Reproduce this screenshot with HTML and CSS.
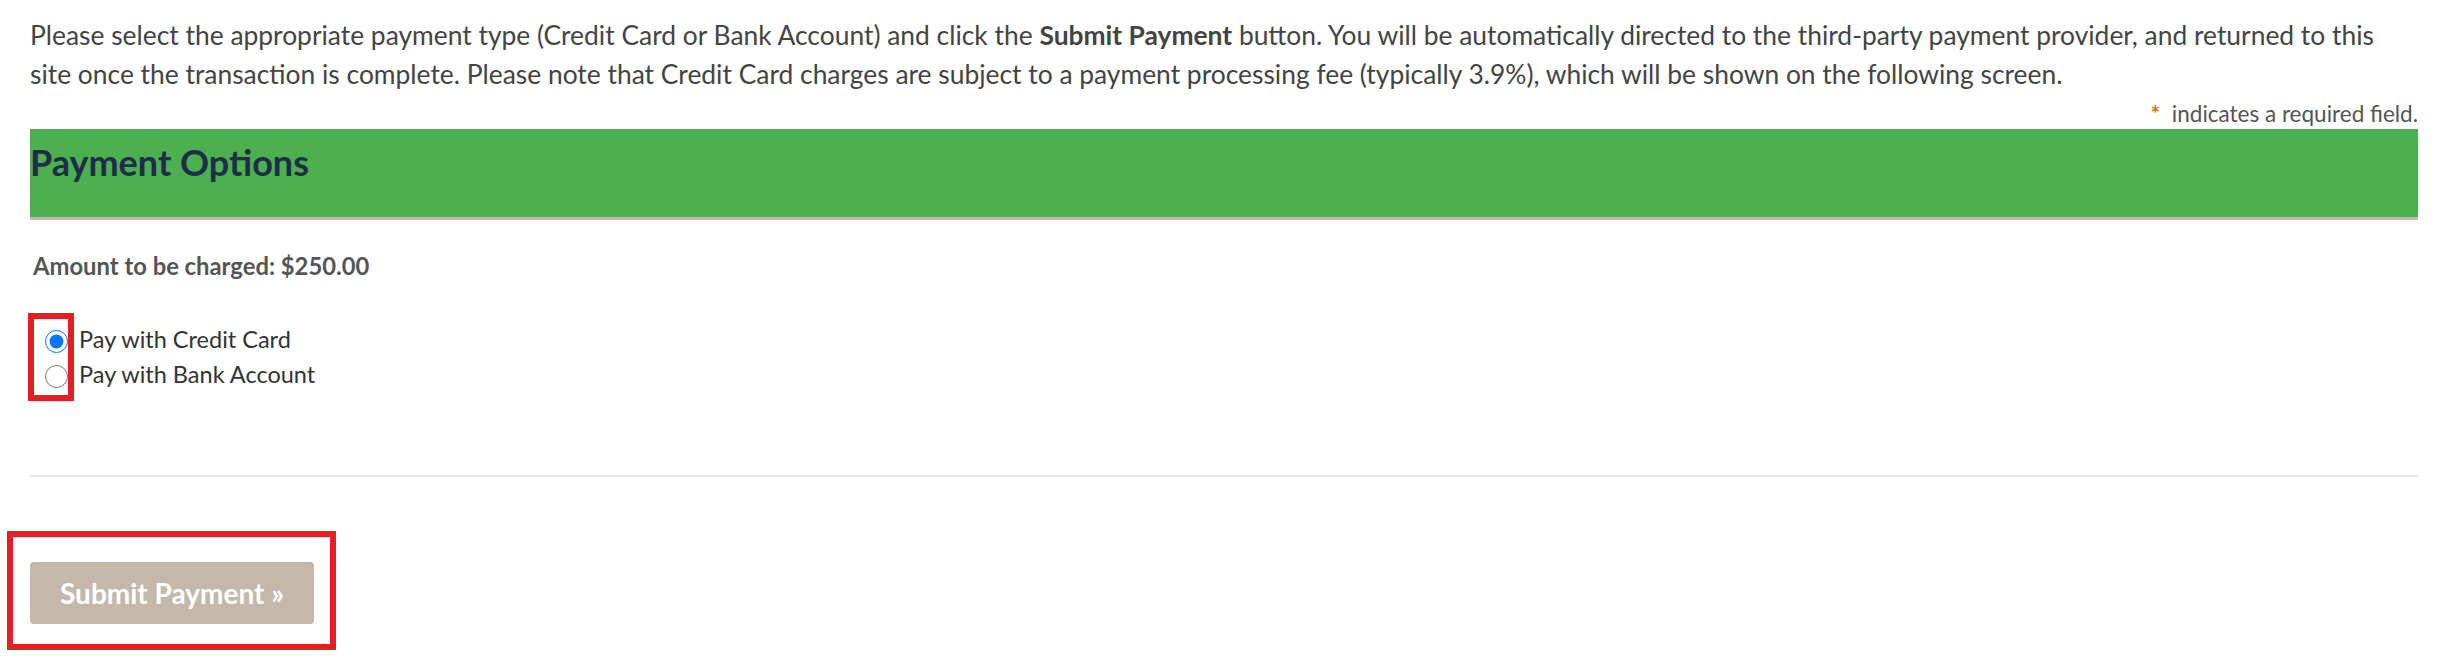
FILE: index.html
```html
<!DOCTYPE html>
<html lang="en">
<head>
  <meta charset="UTF-8" />
  <meta name="viewport" content="width=device-width, initial-scale=1" />
  <title>Payment Options</title>
  <link rel="stylesheet" href="styles.css">
</head>
<body>
  <div class="page">
    <p class="intro">Please select the appropriate payment type (Credit Card or Bank Account) and click the <strong>Submit Payment</strong> button. You will be automatically directed to the third-party payment provider, and returned to this site once the transaction is complete. Please note that Credit Card charges are subject to a payment processing fee (typically 3.9%), which will be shown on the following screen.</p>
    <p class="required"><span class="star">*</span> indicates a required field.</p>

    <div class="section-header">
      <h2>Payment Options</h2>
    </div>

    <div class="section-body">
      <p class="amount">Amount to be charged: $250.00</p>

      <!-- payment type choice -->
      <div class="radio-list">
        <label class="radio-row">
          <input type="radio" name="payType" value="cc" checked>
          <span>Pay with Credit Card</span>
        </label>
        <label class="radio-row">
          <input type="radio" name="payType" value="bank">
          <span>Pay with Bank Account</span>
        </label>
        <div class="highlight highlight-radios"></div>
      </div>
    </div>

    <hr class="divider">

    <div class="actions">
      <button type="submit" class="btn-submit">Submit Payment &raquo;</button>
      <div class="highlight highlight-button"></div>
    </div>
  </div>
</body>
</html>
```

FILE: styles.css
```css
body {
  font-family: Lato, "Open Sans", sans-serif;
  background: #fff;
  color: #444;
  margin: 0;
}
.page {
  padding: 0 33px 0 30px;
}
.intro {
  font-size: 26.4px;
  line-height: 39px;
  margin: 16px 0 0;
  padding-right: 20px;
  color: #444;
}
.intro strong {
  font-weight: bold;
}
.required {
  font-size: 22.5px;
  line-height: 26px;
  text-align: right;
  color: #555;
  margin: 7px 0 2px;
}
.required .star {
  color: #d9730d;
  font-weight: bold;
  margin-right: 6px;
}
.section-header {
  background: #4caf50;
  height: 88px;
  border-bottom: 3px solid #c4b8aa;
}
.section-header h2 {
  margin: 0;
  padding-top: 12px;
  font-size: 36px;
  line-height: 42px;
  font-weight: bold;
  color: #1f2d48;
}
.amount {
  margin: 33px 0 0 3px;
  font-size: 23.8px;
  line-height: 27.6px;
  font-weight: bold;
  color: #555;
}
.radio-list {
  position: relative;
  margin-top: 41px;
}
.radio-row {
  display: flex;
  align-items: flex-start;
  gap: 11px;
  font-size: 23.5px;
  line-height: 35px;
  color: #333;
  padding-left: 15px;
}
.radio-row input {
  width: 23px;
  height: 23px;
  margin: 8px 0 0;
  accent-color: #0075ff;
}
.divider {
  border: 0;
  border-top: 2px solid #e5e5e5;
  margin: 83px 0 0;
}
.actions {
  position: relative;
  padding-top: 85px;
  padding-bottom: 40px;
}
.btn-submit {
  font-family: Lato, "Open Sans", sans-serif;
  font-size: 28px;
  font-weight: bold;
  color: #fff;
  background: #c4b8aa;
  border: 0;
  border-radius: 4px;
  width: 284px;
  height: 62px;
  padding: 0;
  cursor: pointer;
}
/* red annotation frames drawn over the form */
.highlight {
  position: absolute;
  box-sizing: border-box;
  border: 6px solid #e31e24;
  pointer-events: none;
}
.highlight-radios {
  left: -2px;
  top: -9px;
  width: 46px;
  height: 88px;
}
.highlight-button {
  left: -23px;
  top: 54px;
  width: 329px;
  height: 119px;
}
```
